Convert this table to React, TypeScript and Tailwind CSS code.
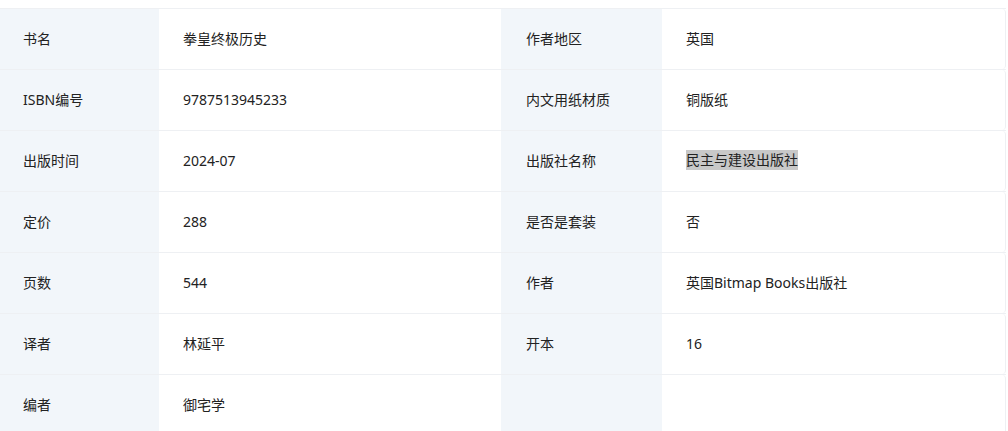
import React from "react";

const rows: [string, string, string, string][] = [
  ["书名", "拳皇终极历史", "作者地区", "英国"],
  ["ISBN编号", "9787513945233", "内文用纸材质", "铜版纸"],
  ["出版时间", "2024-07", "出版社名称", "民主与建设出版社"],
  ["定价", "288", "是否是套装", "否"],
  ["页数", "544", "作者", "英国Bitmap Books出版社"],
  ["译者", "林延平", "开本", "16"],
  ["编者", "御宅学", "", ""],
];

export default function App() {
  return (
    <div
      className="w-[1008px] h-[431px] overflow-hidden bg-white text-[14px] text-[#222]"
      style={{ fontFamily: '"Noto Sans", "Noto Sans CJK SC", sans-serif' }}
    >
      <div className="mt-[8px] w-[1006px] border-t border-[#eef0f3]">
        {rows.map((r, i) => (
          <div
            key={i}
            className="flex h-[61px] border-b border-[#eef0f3]"
          >
            <div className="w-[159px] bg-[#f2f6fa] pl-[23px] pb-[2px] flex items-center">
              {r[0]}
            </div>
            <div className="w-[342px] pl-[24px] pb-[2px] flex items-center">{r[1]}</div>
            <div className="w-[161px] bg-[#f2f6fa] pl-[25px] pb-[2px] flex items-center">
              {r[2]}
            </div>
            <div className="flex-1 pl-[24px] pb-[2px] flex items-center border-r border-[#eef0f3] rounded-r-[4px]">
              {i === 2 ? (
                <span className="bg-[#c8c8c8] leading-[20px]">{r[3]}</span>
              ) : (
                r[3]
              )}
            </div>
          </div>
        ))}
      </div>
    </div>
  );
}
